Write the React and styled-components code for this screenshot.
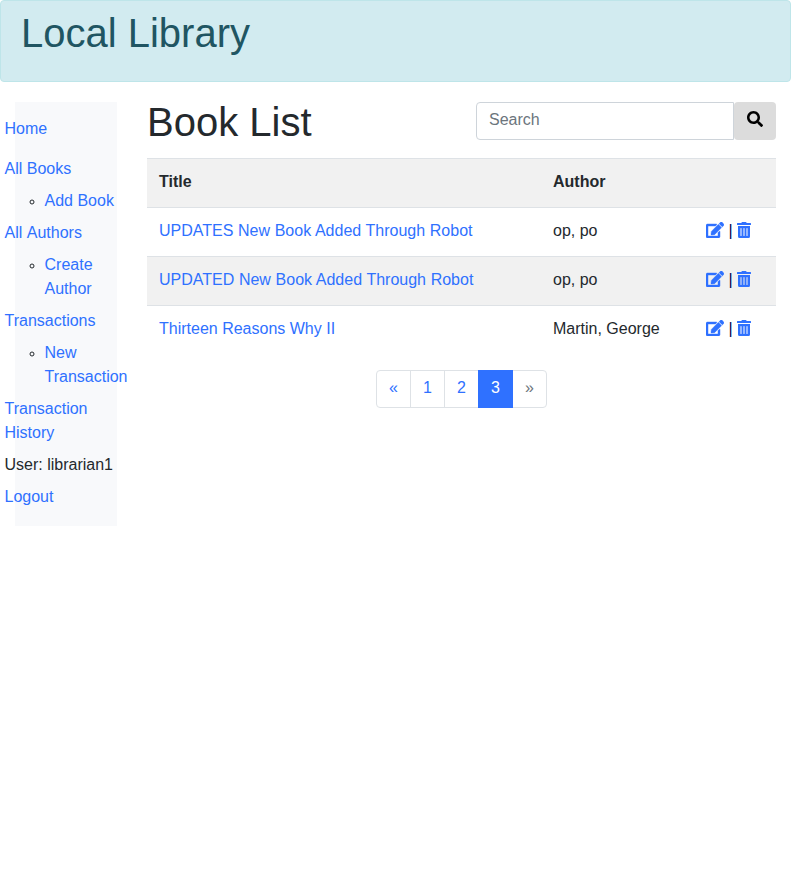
import React from "react";
import styled, { createGlobalStyle } from "styled-components";
import { FaEdit, FaTrashAlt, FaSearch } from "react-icons/fa";

const GlobalStyle = createGlobalStyle`
  *, *::before, *::after { box-sizing: border-box; }
  body {
    margin: 0;
    background: #fff;
    color: #24292d;
    font: 400 16px/1.5 "Liberation Sans", Arial, sans-serif;
  }
`;

const Banner = styled.header`
  height: 82px;
  padding: 8px 20px;
  margin-bottom: 20px;
  border: 1px solid #bee5e9;
  border-radius: 4px;
  background: #d2ebf0;
  color: #205562;
`;

const Heading = styled.h1`
  margin: 0;
  font-size: 40px;
  font-weight: 500;
  line-height: 48px;
`;

const ListHeading = styled(Heading)`
  line-height: 40px;
`;

const Layout = styled.div`
  display: flex;
  align-items: flex-start;
  padding: 0 15px;
`;

const Sidebar = styled.nav`
  flex: 0 0 102px;
  min-width: 0;
  height: 424px;
  padding-top: 15px;
  margin-right: 30px;
  background: #f8f9fb;
`;

const Menu = styled.ul`
  list-style: none;
  margin: 0 0 0 -10.5px;
  padding: 0;
  width: 114px;
`;

const MenuItem = styled.li`
  margin-bottom: ${(p) => (p.$gap ? 16 : 8)}px;
`;

const SubMenu = styled.ul`
  list-style: circle;
  margin: 8px 0 0;
  padding: 0 0 0 40px;
`;

const SubItem = styled.li`
  &::marker { font-size: 14px; }
`;

const Link = styled.a`
  color: #2f71ff;
  text-decoration: none;
  word-spacing: ${(p) => p.$spacing || 0}px;
`;

const Main = styled.main`
  flex: 1;
  min-width: 0;
`;

const TitleBar = styled.div`
  display: flex;
  align-items: flex-start;
  justify-content: space-between;
  height: 56px;
`;

const SearchForm = styled.form`
  display: flex;
  width: 300px;
  height: 38px;
`;

const SearchInput = styled.input`
  flex: 1;
  min-width: 0;
  padding: 0 12px 3px;
  border: 1px solid #ced4da;
  border-radius: 4px 0 0 4px;
  font: inherit;
  &::placeholder { color: #6c757d; }
`;

const SearchButton = styled.button`
  display: flex;
  justify-content: center;
  width: 42px;
  padding: 9px 0 0;
  border: 0;
  border-radius: 4px;
  background: #dcdcdc;
  color: #000;
  font-size: 16px;
`;

const Table = styled.div`
  width: 100%;
`;

const Row = styled.div`
  display: grid;
  grid-template-columns: 394px 152px 1fr;
  height: 49px;
  padding: 11px 12px 0;
  border-top: 1px solid #dee2e6;
  background: ${(p) => (p.$striped ? "#f1f1f1" : "#fff")};
  font-weight: ${(p) => (p.$head ? 700 : 400)};
  line-height: 24px;
`;

const Actions = styled.div`
  padding-left: 1px;
  color: #00004d;
  white-space: nowrap;
  svg { vertical-align: -2px; }
`;

const EditIcon = styled(FaEdit)`
  width: 18px;
  height: 16px;
  stroke: currentColor;
  stroke-width: 14px;
`;

const TrashIcon = styled(FaTrashAlt)`
  width: 14px;
  height: 16px;
`;

const Pagination = styled.div`
  display: flex;
  justify-content: center;
  margin-top: 16px;
`;

const Page = styled.a`
  width: 35px;
  height: 38px;
  margin-left: -1px;
  padding-left: 1px;
  border: 1px solid ${(p) => (p.$active ? "#2f71ff" : "#dee2e6")};
  background: ${(p) => (p.$active ? "#2f71ff" : "#fff")};
  color: ${(p) => (p.$active ? "#fff" : p.$disabled ? "#6c757d" : "#2f71ff")};
  line-height: 34px;
  text-align: center;
  z-index: ${(p) => (p.$active ? 1 : 0)};
  &:first-child { border-radius: 4px 0 0 4px; }
  &:last-child { border-radius: 0 4px 4px 0; }
`;

const books = [
  { title: "UPDATES New Book Added Through Robot", author: "op, po", spacing: 0.2 },
  { title: "UPDATED New Book Added Through Robot", author: "op, po", spacing: 0.2 },
  { title: "Thirteen Reasons Why II", author: "Martin, George" },
];

export default function App() {
  return (
    <>
      <GlobalStyle />
      <Banner><Heading>Local Library</Heading></Banner>
      <Layout>
        <Sidebar>
          <Menu>
            <MenuItem $gap><Link>Home</Link></MenuItem>
            <MenuItem><Link>All Books</Link>
              <SubMenu><SubItem><Link>Add Book</Link></SubItem></SubMenu>
            </MenuItem>
            <MenuItem><Link $spacing={0.9}>All Authors</Link>
              <SubMenu><SubItem><Link>Create Author</Link></SubItem></SubMenu>
            </MenuItem>
            <MenuItem><Link>Transactions</Link>
              <SubMenu><SubItem><Link>New Transaction</Link></SubItem></SubMenu>
            </MenuItem>
            <MenuItem><Link>Transaction History</Link></MenuItem>
            <MenuItem>User: librarian1</MenuItem>
            <MenuItem><Link>Logout</Link></MenuItem>
          </Menu>
        </Sidebar>
        <Main>
          <TitleBar>
            <ListHeading>Book List</ListHeading>
            <SearchForm>
              <SearchInput placeholder="Search" />
              <SearchButton type="button" aria-label="Search"><FaSearch /></SearchButton>
            </SearchForm>
          </TitleBar>
          <Table>
            <Row $striped $head><div>Title</div><div>Author</div></Row>
            {books.map(({ title, author, spacing }, i) => (
              <Row key={title} $striped={i % 2 === 1}>
                <Link $spacing={spacing}>{title}</Link>
                <div>{author}</div>
                <Actions>
                  <Link><EditIcon /></Link> | <Link><TrashIcon /></Link>
                </Actions>
              </Row>
            ))}
          </Table>
          <Pagination>
            <Page>«</Page><Page>1</Page><Page>2</Page><Page $active>3</Page><Page $disabled>»</Page>
          </Pagination>
        </Main>
      </Layout>
    </>
  );
}
